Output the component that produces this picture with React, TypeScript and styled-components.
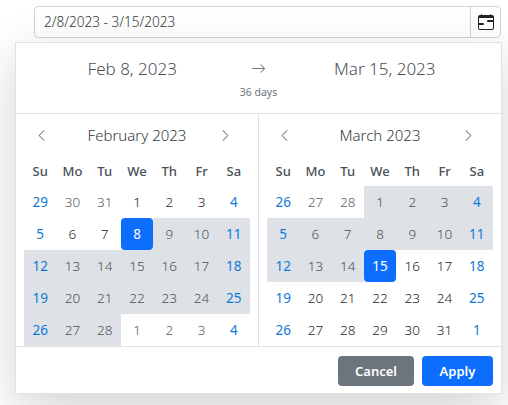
import styled, { createGlobalStyle } from "styled-components";
import { BsArrowRight, BsCalendarRange, BsChevronLeft, BsChevronRight } from "react-icons/bs";

const GlobalStyle = createGlobalStyle`
  html, body {
    margin: 0;
    background: #fff;
  }

  body {
    font-family: "Noto Sans", "Open Sans", sans-serif;
    color: #212529;
    overflow: hidden;
  }

  * {
    box-sizing: border-box;
  }
`;

const Page = styled.div`
  width: 508px;
  height: 405px;
  padding: 6px 7px 0 34px;
`;

const Picker = styled.div`
  position: relative;
`;

const InputGroup = styled.div`
  display: flex;
  height: 32px;
  border: 1px solid #ced4da;
  border-radius: 4px;
`;

const DateInput = styled.div`
  flex: 1;
  padding-left: 9px;
  font-size: 13.6px;
  font-weight: 300;
  line-height: 30px;
  color: #343a40;
`;

const IconAddon = styled.div`
  width: 30px;
  display: flex;
  align-items: center;
  justify-content: center;
  border-left: 1px solid #ced4da;
  color: #212529;
`;

const Popover = styled.div`
  position: absolute;
  top: 36px;
  left: -19px;
  right: -1px;
  height: 352px;
  display: flex;
  flex-direction: column;
  background: #fff;
  border: 1px solid #dee2e6;
  box-shadow: 0 16px 48px rgba(0, 0, 0, 0.175);
`;

const RangeHeader = styled.div`
  height: 71px;
  flex-shrink: 0;
  padding-top: 12px;
  border-bottom: 1px solid #dee2e6;
`;

const RangeRow = styled.div`
  display: grid;
  grid-template-columns: 1fr 20px 1fr;
  align-items: center;
  height: 26px;
  color: #495057;
`;

const RangeDate = styled.div`
  text-align: center;
  font-size: 17px;
  font-weight: 300;
`;

const RangeArrow = styled.div`
  display: flex;
  justify-content: center;
  color: #6c757d;
`;

const DayCount = styled.div`
  margin-top: 3px;
  text-align: center;
  font-size: 10.5px;
  line-height: 16px;
  color: #6c757d;
`;

const Calendars = styled.div`
  flex: 1;
  min-height: 0;
  display: grid;
  grid-template-columns: 243px 1fr;
  overflow: hidden;
`;

const Pane = styled.div<{ $divided?: boolean }>`
  padding: 0 8px;
  border-right: ${(p) => (p.$divided ? "1px solid #dee2e6" : "none")};
`;

const MonthBar = styled.div`
  height: 40px;
  padding-top: 2px;
  display: grid;
  grid-template-columns: 34px 1fr 34px;
  align-items: center;
  color: #6c757d;
`;

const PrevMonth = styled.div`
  display: flex;
  justify-content: center;
`;

const NextMonth = styled.div`
  display: flex;
  padding-left: 3px;
`;

const MonthTitle = styled.div`
  text-align: center;
  font-size: 15px;
  font-weight: 300;
  color: #343a40;
`;

const Grid = styled.div`
  display: grid;
  grid-template-columns: repeat(7, 1fr);
  grid-auto-rows: 32px;
  width: 226px;
`;

const Weekday = styled.div`
  display: flex;
  align-items: center;
  justify-content: center;
  padding-top: 2px;
  font-size: 13px;
  font-weight: 500;
  color: #495057;
`;

interface DayStyle {
  $weekend: boolean;
  $muted: boolean;
  $inRange: boolean;
  $selected: boolean;
}

const dayColor = (p: DayStyle) => {
  if (p.$selected) return "#fff";
  if (p.$weekend) return "#0d7ad8";
  if (p.$muted) return "#565e64";
  if (p.$inRange) return "#495057";
  return "#212529";
};

const Day = styled.div<DayStyle>`
  display: flex;
  align-items: center;
  justify-content: center;
  font-size: 13.5px;
  font-weight: ${(p) => (p.$selected || p.$weekend ? 400 : 300)};
  color: ${dayColor};
  background: ${(p) => (p.$selected ? "#0d6efd" : p.$inRange ? "#dee2e6" : "transparent")};
  border-radius: ${(p) => (p.$selected ? "4px" : "0")};
`;

const Footer = styled.div`
  height: 47px;
  flex-shrink: 0;
  display: flex;
  justify-content: flex-end;
  align-items: flex-start;
  gap: 8px;
  padding: 9px 8px 0 0;
  border-top: 1px solid #dee2e6;
`;

const Button = styled.button<{ $primary?: boolean }>`
  height: 30px;
  width: ${(p) => (p.$primary ? "71px" : "76px")};
  border: none;
  border-radius: 4px;
  font-family: inherit;
  font-size: 13px;
  font-weight: 600;
  color: #fff;
  background: ${(p) => (p.$primary ? "#0d6efd" : "#6c757d")};
`;

const WEEKDAYS = ["Su", "Mo", "Tu", "We", "Th", "Fr", "Sa"];

interface CalendarCell {
  label: number;
  muted: boolean;
  inRange: boolean;
  selected: boolean;
}

function cell(label: number, muted: boolean, inRange: boolean, selected = false): CalendarCell {
  return { label, muted, inRange, selected };
}

const februaryCells: CalendarCell[] = [
  ...[29, 30, 31].map((d) => cell(d, true, false)),
  ...Array.from({ length: 28 }, (_, i) => {
    const d = i + 1;
    return cell(d, false, d >= 8, d === 8);
  }),
  ...[1, 2, 3, 4].map((d) => cell(d, true, false)),
];

const marchCells: CalendarCell[] = [
  ...[26, 27, 28].map((d) => cell(d, true, false)),
  ...Array.from({ length: 31 }, (_, i) => {
    const d = i + 1;
    return cell(d, false, d <= 15, d === 15);
  }),
  cell(1, true, false),
];

interface MonthProps {
  title: string;
  cells: CalendarCell[];
  divided?: boolean;
}

function Month({ title, cells, divided }: MonthProps) {
  return (
    <Pane $divided={divided}>
      <MonthBar>
        <PrevMonth>
          <BsChevronLeft size={13} />
        </PrevMonth>
        <MonthTitle>{title}</MonthTitle>
        <NextMonth>
          <BsChevronRight size={13} />
        </NextMonth>
      </MonthBar>
      <Grid>
        {WEEKDAYS.map((d) => (
          <Weekday key={d}>{d}</Weekday>
        ))}
        {cells.map((c, i) => (
          <Day
            key={i}
            $weekend={i % 7 === 0 || i % 7 === 6}
            $muted={c.muted}
            $inRange={c.inRange}
            $selected={c.selected}
          >
            {c.label}
          </Day>
        ))}
      </Grid>
    </Pane>
  );
}

export default function App() {
  return (
    <Page>
      <GlobalStyle />
      <Picker>
        <InputGroup>
          <DateInput>2/8/2023 - 3/15/2023</DateInput>
          <IconAddon>
            <BsCalendarRange size={16} />
          </IconAddon>
        </InputGroup>
        <Popover>
          <RangeHeader>
            <RangeRow>
              <RangeDate>Feb 8, 2023</RangeDate>
              <RangeArrow>
                <BsArrowRight size={15} />
              </RangeArrow>
              <RangeDate>Mar 15, 2023</RangeDate>
            </RangeRow>
            <DayCount>36 days</DayCount>
          </RangeHeader>
          <Calendars>
            <Month title="February 2023" cells={februaryCells} divided />
            <Month title="March 2023" cells={marchCells} />
          </Calendars>
          <Footer>
            <Button>Cancel</Button>
            <Button $primary>Apply</Button>
          </Footer>
        </Popover>
      </Picker>
    </Page>
  );
}
